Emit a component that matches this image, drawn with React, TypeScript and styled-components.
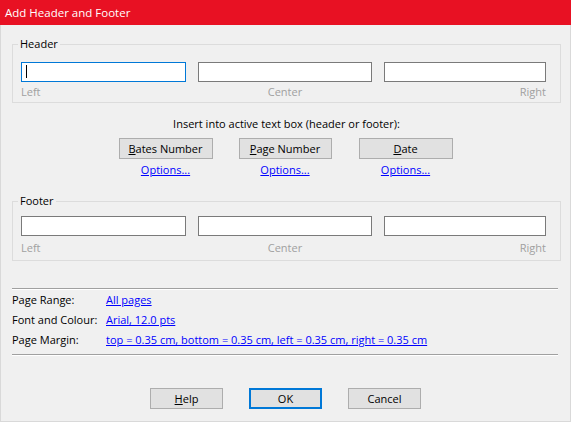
import React from "react";
import styled, { createGlobalStyle } from "styled-components";

const GlobalStyle = createGlobalStyle`
  html, body { margin: 0; padding: 0; background: #f0f0f0; }
  body { font-family: "Open Sans", "Noto Sans", sans-serif; font-size: 11px; color: #000; }
  * { box-sizing: border-box; }
`;

const Window = styled.div`
  width: 571px;
  height: 422px;
  display: flex;
  flex-direction: column;
  background: #f0f0f0;
  border: 1px solid #d9d9d9;
  border-top: none;
`;

const TitleBar = styled.div`
  height: 25px;
  margin: 0 -1px;
  background: #e81123;
  color: #fff;
  font-size: 11.5px;
  line-height: 25px;
  padding-left: 5px;
  white-space: nowrap;
`;

const Body = styled.div`
  display: flex;
  flex-direction: column;
  padding: 0 9px 0 11px;
`;

const Group = styled.fieldset<{ $top: number; $pt: number; $pb: number }>`
  margin: ${(p) => p.$top}px 0 0 0;
  padding: ${(p) => p.$pt}px 13px ${(p) => p.$pb}px 8px;
  border: 1px solid #dcdcdc;
  min-width: 0;
`;

const Legend = styled.legend`
  margin-left: -3px;
  padding: 0 2px;
  line-height: 16px;
  font-size: 11px;
`;

const FieldGrid = styled.div`
  display: grid;
  grid-template-columns: 165px 174px 162px;
  column-gap: 12px;
`;

const FieldWrap = styled.div`
  position: relative;
`;

const TextField = styled.input<{ $focused?: boolean }>`
  display: block;
  width: 100%;
  height: 20px;
  margin: 0;
  padding: 0 4px;
  background: #fff;
  border: 1px solid ${(p) => (p.$focused ? "#0078d7" : "#7a7a7a")};
  outline: none;
  font: inherit;
`;

const Caret = styled.span`
  position: absolute;
  left: 5px;
  top: 3px;
  width: 1px;
  height: 13px;
  background: #000;
`;

const PosLabel = styled.div<{ $align: "left" | "center" | "right"; $mt: number }>`
  margin-top: ${(p) => p.$mt}px;
  line-height: 14px;
  color: #a0a0a0;
  text-align: ${(p) => p.$align};
`;

const Instruction = styled.div`
  margin-top: 13px;
  line-height: 16px;
  text-align: center;
`;

const InsertRow = styled.div`
  display: flex;
  justify-content: center;
  margin-top: 6px;
  padding-right: 2px;
`;

const InsertCol = styled.div<{ $w: number; $ml: number }>`
  display: flex;
  flex-direction: column;
  align-items: center;
  width: ${(p) => p.$w}px;
  margin-left: ${(p) => p.$ml}px;
`;

const Button = styled.button<{ $w?: number; $default?: boolean }>`
  width: ${(p) => (p.$w ? `${p.$w}px` : "100%")};
  height: 21px;
  margin: 0;
  padding: 0;
  background: #e1e1e1;
  border: ${(p) => (p.$default ? "2px solid #0078d7" : "1px solid #adadad")};
  font: inherit;
  color: #000;
  line-height: 17px;
`;

const Link = styled.a`
  color: #0000ff;
  text-decoration: underline;
  line-height: 16px;
  cursor: pointer;
  white-space: nowrap;
`;

const OptionsLink = styled(Link)`
  margin-top: 3px;
`;

const Separator = styled.div<{ $mt: number }>`
  margin: ${(p) => p.$mt}px 3px 0 0;
  height: 2px;
  border-top: 1px solid #a0a0a0;
  border-bottom: 1px solid #ffffff;
`;

const InfoGrid = styled.div`
  display: grid;
  grid-template-columns: 94px 1fr;
  grid-auto-rows: 20px;
  align-items: center;
  line-height: 20px;
`;

const InfoLabel = styled.div`
  white-space: nowrap;
`;

const DialogButtons = styled.div`
  display: flex;
  justify-content: center;
  gap: 26px;
  margin-top: 32px;
  padding-right: 2px;
`;

type Align = "left" | "center" | "right";
const positions: { label: string; align: Align }[] = [
  { label: "Left", align: "left" },
  { label: "Center", align: "center" },
  { label: "Right", align: "right" },
];

function Fields({ focusFirst, labelTop }: { focusFirst?: boolean; labelTop: number }) {
  return (
    <FieldGrid>
      {positions.map((p, i) => (
        <div key={p.label}>
          <FieldWrap>
            <TextField $focused={focusFirst && i === 0} readOnly />
            {focusFirst && i === 0 && <Caret />}
          </FieldWrap>
          <PosLabel $align={p.align} $mt={labelTop}>
            {p.label}
          </PosLabel>
        </div>
      ))}
    </FieldGrid>
  );
}

const inserts = [
  { key: "B", rest: "ates Number", w: 94, ml: 0 },
  { key: "P", rest: "age Number", w: 93, ml: 26 },
  { key: "D", rest: "ate", w: 94, ml: 27 },
];

const info = [
  { label: "Page Range:", value: "All pages" },
  { label: "Font and Colour:", value: "Arial, 12.0 pts" },
  {
    label: "Page Margin:",
    value: "top = 0.35 cm, bottom = 0.35 cm, left = 0.35 cm, right = 0.35 cm",
  },
];

export default function App() {
  return (
    <>
      <GlobalStyle />
      <Window>
        <TitleBar>Add Header and Footer</TitleBar>
        <Body>
          <Group $top={11} $pt={10} $pb={3}>
            <Legend>Header</Legend>
            <Fields focusFirst labelTop={3} />
          </Group>

          <Instruction>Insert into active text box (header or footer):</Instruction>
          <InsertRow>
            {inserts.map((b) => (
              <InsertCol key={b.key} $w={b.w} $ml={b.ml}>
                <Button>
                  <u>{b.key}</u>
                  {b.rest}
                </Button>
                <OptionsLink>Options...</OptionsLink>
              </InsertCol>
            ))}
          </InsertRow>

          <Group $top={15} $pt={7} $pb={5}>
            <Legend>Footer</Legend>
            <Fields labelTop={5} />
          </Group>

          <Separator $mt={27} />
          <InfoGrid>
            {info.map((r) => (
              <React.Fragment key={r.label}>
                <InfoLabel>{r.label}</InfoLabel>
                <div>
                  <Link>{r.value}</Link>
                </div>
              </React.Fragment>
            ))}
          </InfoGrid>
          <Separator $mt={4} />

          <DialogButtons>
            <Button $w={73}>
              <u>H</u>elp
            </Button>
            <Button $w={73} $default>
              OK
            </Button>
            <Button $w={73}>Cancel</Button>
          </DialogButtons>
        </Body>
      </Window>
    </>
  );
}
